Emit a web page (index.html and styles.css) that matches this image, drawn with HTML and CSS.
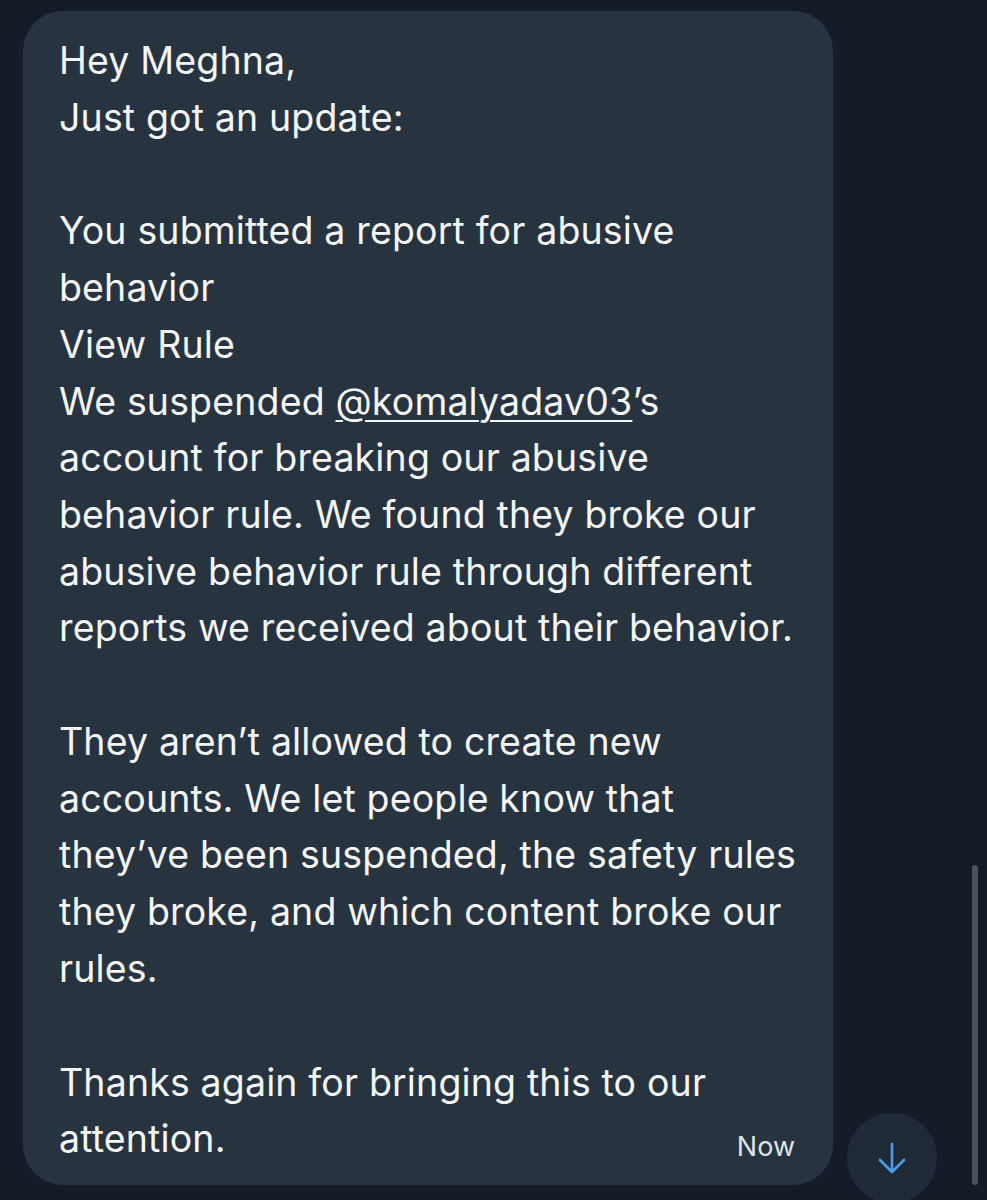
FILE: index.html
```html
<!DOCTYPE html>
<html>
<head>
<meta charset="utf-8">
<link rel="stylesheet" href="styles.css">
</head>
<body>
<main class="chat">
  <div class="bubble">
    <p class="msg">Hey Meghna,<br>Just got an update:</p>
    <p class="msg">You submitted a report for abusive<br>behavior<br>View Rule<br>We suspended <span class="mention">@komalyadav03</span>’s<br>account for breaking our abusive<br>behavior rule. We found they broke our<br>abusive behavior rule through different<br>reports we received about their behavior.</p>
    <p class="msg">They aren’t allowed to create new<br>accounts. We let people know that<br>they’ve been suspended, the safety rules<br>they broke, and which content broke our<br>rules.</p>
    <div class="last">
      <p class="msg">Thanks again for bringing this to our<br>attention.</p>
      <span class="time">Now</span>
    </div>
  </div>
</main>
<button class="fab" aria-label="Scroll to bottom">
  <svg viewBox="0 0 30 32" width="30" height="32"><path d="M15 2v28M3 18l12 12 12-12" fill="none" stroke="#4a9eea" stroke-width="2.6" stroke-linecap="round" stroke-linejoin="round"/></svg>
</button>
<div class="scrollbar"></div>
</body>
</html>
```
FILE: styles.css
```css
html, body {
  margin: 0;
  padding: 0;
  background: #151c27;
  height: 1200px;
  overflow: hidden;
}
.chat {
  padding: 11px 0 0 23px;
}
.bubble {
  width: 810px;
  height: 1174px;
  box-sizing: border-box;
  background: #283340;
  border-radius: 40px;
  padding: 22px 38px 0 36px;
  font-family: Inter, "Open Sans", sans-serif;
  color: #f4f6f8;
}
.msg {
  margin: 0 0 57px 0;
  font-size: 37.5px;
  line-height: 56.7px;
  white-space: nowrap;
  letter-spacing: 0.15px;
}
.mention {
  text-decoration: underline;
  text-decoration-thickness: 2px;
  text-underline-offset: 5px;
}
.last {
  display: flex;
  justify-content: space-between;
  align-items: flex-end;
}
.last .msg {
  margin: 0;
}
.time {
  font-family: Inter, "Open Sans", sans-serif;
  font-size: 27px;
  color: #dfe3e7;
  margin-bottom: 5px;
}
.fab {
  position: absolute;
  left: 847px;
  top: 1113px;
  width: 90px;
  height: 90px;
  border-radius: 50%;
  border: none;
  background: #212b38;
  display: flex;
  align-items: center;
  justify-content: center;
  padding: 0;
}
.scrollbar {
  position: absolute;
  left: 972px;
  top: 865px;
  width: 6px;
  height: 320px;
  border-radius: 3px;
  background: #4a525c;
}
```
